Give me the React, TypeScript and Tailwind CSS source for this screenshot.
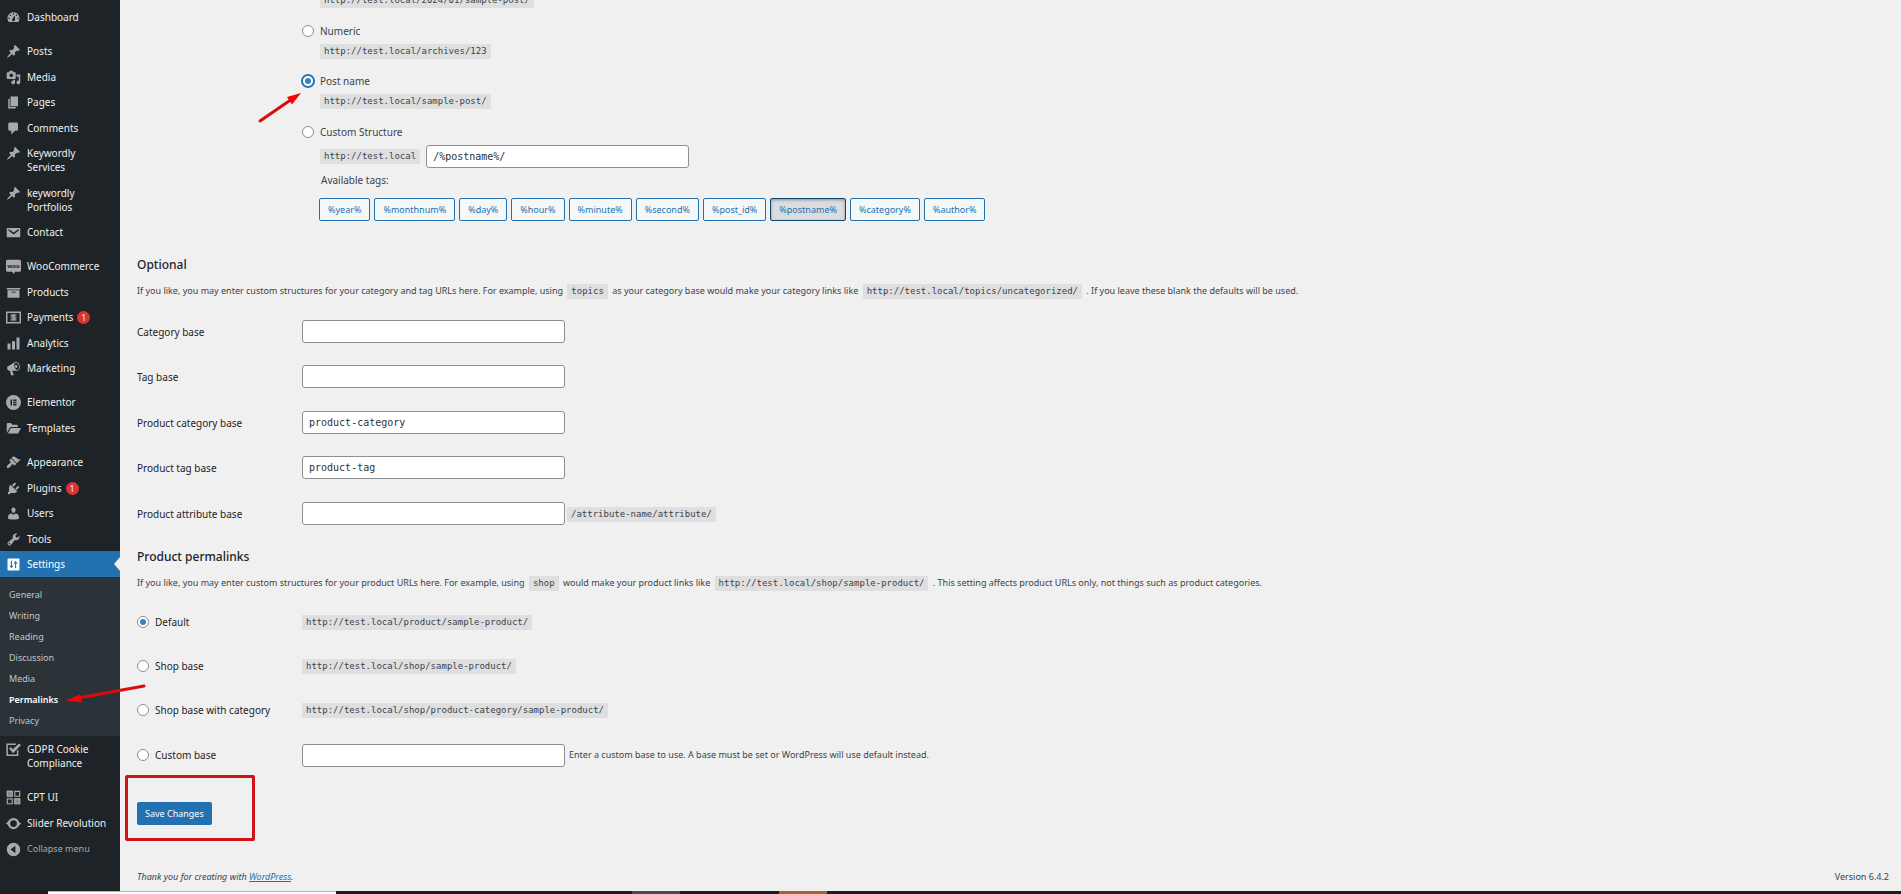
import React from 'react';

interface MenuItem {
    label: string;
    icon: React.ReactNode;
    badge?: number;
    active?: boolean;
}

const glyph = (d: string) => <path d={d} fillRule="evenodd" />;

const icons = {
    dashboard: glyph('M3.76 16h12.48c1.1-1.37 1.76-3.11 1.76-5 0-4.42-3.58-8-8-8s-8 3.58-8 8c0 1.89.66 3.63 1.76 5zM10 4c.55 0 1 .45 1 1s-.45 1-1 1-1-.45-1-1 .45-1 1-1zM6 6c.55 0 1 .45 1 1s-.45 1-1 1-1-.45-1-1 .45-1 1-1zm8 0c.55 0 1 .45 1 1s-.45 1-1 1-1-.45-1-1 .45-1 1-1zm-5.37 5.55L12 7v6c0 1.1-.9 2-2 2s-2-.9-2-2c0-.57.24-1.08.63-1.45zM4 10c.55 0 1 .45 1 1s-.45 1-1 1-1-.45-1-1 .45-1 1-1zm12 0c.55 0 1 .45 1 1s-.45 1-1 1-1-.45-1-1 .45-1 1-1z'),
    pin: glyph('M10.44 3.02l1.82-1.82 6.36 6.35-1.83 1.82c-1.05-.68-2.48-.57-3.41.36l-.75.75c-.92.93-1.04 2.35-.35 3.41l-1.83 1.82-2.41-2.41-2.8 2.79c-.42.42-3.38 2.71-3.8 2.29s1.86-3.39 2.28-3.81l2.79-2.79L4.1 9.36l1.83-1.82c1.05.69 2.48.57 3.4-.36l.75-.75c.93-.92 1.05-2.35.36-3.41z'),
    media: glyph('M13 11V4c0-.55-.45-1-1-1h-1.67L9 1H5L3.67 3H2c-.55 0-1 .45-1 1v7c0 .55.45 1 1 1h10c.55 0 1-.45 1-1zM7 4.5c1.38 0 2.5 1.12 2.5 2.5S8.38 9.5 7 9.5 4.5 8.38 4.5 7 5.62 4.5 7 4.5zM14 6h5v10.5c0 1.38-1.12 2.5-2.5 2.5S14 17.88 14 16.5s1.12-2.5 2.5-2.5c.17 0 .34.02.5.05V9h-3V6zm-4 8.05V13h2v3.5c0 1.38-1.12 2.5-2.5 2.5S7 17.88 7 16.5 8.12 14 9.5 14c.17 0 .34.02.5.05z'),
    page: glyph('M6 15V2h10v13H6zm-1 1h8v2H3V5h2v11z'),
    comment: glyph('M5 2h9c1.1 0 2 .9 2 2v7c0 1.1-.9 2-2 2h-2l-5 5v-5H5c-1.1 0-2-.9-2-2V4c0-1.1.9-2 2-2z'),
    email: glyph('M2 4h16.5c.3 0 .5.2.5.5v11.3c0 .3-.2.5-.5.5h-17c-.3 0-.5-.2-.5-.5V4.5c0-.3.3-.5.6-.5zm8.2 8.6l6.9-5.4c.3-.3.3-.7.1-1-.3-.4-.8-.4-1.1-.2l-5.9 4-5.9-4c-.3-.2-.8-.2-1.1.2-.2.3-.2.7.1 1z'),
    woo: (
        <>
            <path d="M2 1h16a2 2 0 0 1 2 2v12a2 2 0 0 1-2 2h-6l-1.5 3L8 17H2a2 2 0 0 1-2-2V3a2 2 0 0 1 2-2z" />
            <text x="10" y="12" textAnchor="middle" fontSize="8" fontWeight="700" fill="#1d2327" fontFamily="Noto Sans, sans-serif">woo</text>
        </>
    ),
    archive: glyph('M19 4v2H1V4h18zM2 7h16v10H2V7zm11 3V9H7v1h6z'),
    payments: (
        <>
            <path d="M0 2h20v16H0zM2 4v12h16V4z" fillRule="evenodd" />
            <path d="M6 5h8v10H6z" opacity=".5" />
            <text x="10" y="14" textAnchor="middle" fontSize="11" fontWeight="700" fontFamily="Noto Sans, sans-serif">$</text>
        </>
    ),
    chart: glyph('M18 18V2h-4v16h4zm-6 0V7H8v11h4zm-6 0v-8H2v8h4z'),
    megaphone: glyph('M18.15 5.94c.46 1.62.38 3.22-.02 4.48-.42 1.28-1.26 2.18-2.3 2.48-.16.06-.26.06-.4.06-.06.02-.12.02-.18.02-.06.02-.14.02-.22.02h-6.8l2.22 5.5c.02.14-.06.26-.14.34-.08.1-.24.16-.34.16H6.95c-.1 0-.26-.06-.34-.16-.08-.08-.16-.2-.14-.34l-1-5.5H4.25l-.02-.02c-.5.06-1.08-.18-1.54-.62s-.88-1.08-1.06-1.88c-.24-.8-.2-1.56-.02-2.2.18-.62.58-1.08 1.06-1.3l.02-.02 9-5.4c.1-.06.18-.1.24-.16.06-.04.14-.08.24-.12.16-.08.28-.12.5-.18 1.04-.3 2.24.1 3.22.98s1.84 2.24 2.26 3.86zm-2.58 5.98h-.02c.4-.1.74-.34 1.04-.7.58-.7.86-1.76.86-3.04 0-.64-.1-1.3-.28-1.98-.34-1.36-1.02-2.5-1.78-3.24s-1.68-1.1-2.46-.88c-.82.22-1.4.96-1.7 2-.32 1.04-.28 2.36.06 3.72.38 1.36 1 2.5 1.8 3.24.78.74 1.62 1.1 2.48.88zm-2.54-7.08c.22-.04.42-.02.62.04.38.16.76.48 1.02 1s.42 1.2.42 1.78c0 .3-.04.56-.12.8-.18.48-.44.84-.86.94-.34.1-.8-.06-1.14-.4s-.64-.86-.78-1.5c-.18-.62-.12-1.24.02-1.72s.48-.84.82-.94z'),
    elementor: (
        <>
            <circle cx="10" cy="10" r="10" />
            <path d="M6 6h2v8H6zM9.5 6H14v2H9.5zM9.5 9H14v2H9.5zM9.5 12H14v2H9.5z" fill="#1d2327" />
        </>
    ),
    folder: glyph('M1 16V4c0-.8.5-1.3 1.3-1.3h4.2L8.5 5h6c.8 0 1.3.5 1.3 1.2V8H6.5c-.7 0-1.2.3-1.5.9zm1.5.8L6 10c.2-.5.6-.8 1.2-.8H20l-3.5 6.9c-.3.5-.7.7-1.2.7z'),
    appearance: glyph('M14.48 11.06L7.41 3.99l1.5-1.5c.5-.56 2.3-.47 3.51.32 1.21.8 1.43 1.28 2.91 2.1 1.18.64 2.45 1.26 4.45.85zm-.71.71L6.7 4.7 4.93 6.47c-.39.39-.39 1.02 0 1.41l1.06 1.06c.39.39.39 1.03 0 1.42-.6.6-1.43 1.11-2.21 1.69-.35.26-.7.53-1.01.84C1.43 14.23.4 16.08 1.4 17.07c.99 1 2.84-.03 4.18-1.36.31-.31.58-.66.85-1.02.57-.78 1.08-1.61 1.69-2.21.39-.39 1.02-.39 1.41 0l1.06 1.06c.39.39 1.02.39 1.41 0z'),
    plugin: glyph('M13.11 4.36L9.87 7.6 8 5.73l3.24-3.24c.35-.34 1.05-.2 1.56.32.52.51.66 1.21.31 1.55zm-8 1.77l.91-1.12 9.01 9.01-1.19.84c-.71.71-2.63 1.16-3.82 1.16H6.14L4.9 17.26c-.59.59-1.54.59-2.12 0-.59-.58-.59-1.53 0-2.12l1.24-1.24v-3.88c0-1.13.4-3.19 1.09-3.89zm7.26 3.97l3.24-3.24c.34-.35 1.04-.21 1.55.31.52.51.66 1.21.31 1.55l-3.24 3.25z'),
    user: glyph('M10 9.25c-2.27 0-2.73-3.44-2.73-3.44C7 4.02 7.82 2 9.97 2c2.16 0 2.98 2.02 2.71 3.81 0 0-.41 3.44-2.68 3.44zm0 2.57L12.72 10c2.39 0 4.52 2.33 4.52 4.53v2.49s-3.65 1.13-7.24 1.13c-3.65 0-7.24-1.13-7.24-1.13v-2.49c0-2.25 1.94-4.48 4.47-4.48z'),
    wrench: glyph('M16.68 9.77c-1.34 1.34-3.3 1.67-4.95.99l-5.41 6.52c-.99.99-2.59.99-3.58 0s-.99-2.59 0-3.57l6.52-5.42c-.68-1.65-.35-3.61.99-4.95 1.28-1.28 3.12-1.62 4.72-1.06l-2.89 2.89 2.82 2.82 2.86-2.87c.53 1.58.18 3.39-1.08 4.65zM3.81 16.21c.4.39 1.04.39 1.43 0 .4-.4.4-1.04 0-1.43-.39-.4-1.03-.4-1.43 0-.39.39-.39 1.03 0 1.43z'),
    settings: glyph('M18 17V3c0-.55-.45-1-1-1H3c-.55 0-1 .45-1 1v14c0 .55.45 1 1 1h14c.55 0 1-.45 1-1zM6.5 5H8v6.5h2L7.25 15 4.5 11.5h2zM12 15V8.5h-2L12.75 5l2.75 3.5h-2V15z'),
    gdpr: (
        <>
            <path d="M15.5 11v6.5h-14V3H13" fill="none" stroke="currentColor" strokeWidth="2" />
            <path d="M4 8.5l2.5-2L9 9.5 17.5 2 20 4 9.5 15z" />
        </>
    ),
    cpt: (
        <>
            <path d="M1 1h8v8H1zM11 11h8v8h-8z" opacity=".75" />
            <path d="M11.75 1.75h6.5v6.5h-6.5zM1.75 11.75h6.5v6.5h-6.5zM1.75 1.75h6.5v6.5h-6.5zM11.75 11.75h6.5v6.5h-6.5z" fill="none" stroke="currentColor" strokeWidth="1.5" />
        </>
    ),
    slider: (
        <>
            <circle cx="10" cy="10" r="6" fill="none" stroke="currentColor" strokeWidth="3" />
            <path d="M0 10l4-4v7zM20 10l-4 4V7z" />
        </>
    ),
    collapse: glyph('M10 1a9 9 0 1 0 0 18 9 9 0 0 0 0-18zM12.5 5v10L6 10z'),
};

const menuGroups: MenuItem[][] = [
    [{ label: 'Dashboard', icon: icons.dashboard }],
    [
        { label: 'Posts', icon: icons.pin },
        { label: 'Media', icon: icons.media },
        { label: 'Pages', icon: icons.page },
        { label: 'Comments', icon: icons.comment },
        { label: 'Keywordly Services', icon: icons.pin },
        { label: 'keywordly Portfolios', icon: icons.pin },
        { label: 'Contact', icon: icons.email },
    ],
    [
        { label: 'WooCommerce', icon: icons.woo },
        { label: 'Products', icon: icons.archive },
        { label: 'Payments', icon: icons.payments, badge: 1 },
        { label: 'Analytics', icon: icons.chart },
        { label: 'Marketing', icon: icons.megaphone },
    ],
    [
        { label: 'Elementor', icon: icons.elementor },
        { label: 'Templates', icon: icons.folder },
    ],
    [
        { label: 'Appearance', icon: icons.appearance },
        { label: 'Plugins', icon: icons.plugin, badge: 1 },
        { label: 'Users', icon: icons.user },
        { label: 'Tools', icon: icons.wrench },
        { label: 'Settings', icon: icons.settings, active: true },
    ],
];

const lowerGroups: MenuItem[][] = [
    [{ label: 'GDPR Cookie Compliance', icon: icons.gdpr }],
    [
        { label: 'CPT UI', icon: icons.cpt },
        { label: 'Slider Revolution', icon: icons.slider },
    ],
];

const settingsPages = ['General', 'Writing', 'Reading', 'Discussion', 'Media', 'Permalinks', 'Privacy'];

const tags = ['year', 'monthnum', 'day', 'hour', 'minute', 'second', 'post_id', 'postname', 'category', 'author'];

const baseFields = [
    { id: 'category-base', label: 'Category base', value: '' },
    { id: 'tag-base', label: 'Tag base', value: '' },
    { id: 'product-category-base', label: 'Product category base', value: 'product-category' },
    { id: 'product-tag-base', label: 'Product tag base', value: 'product-tag' },
    { id: 'product-attribute-base', label: 'Product attribute base', value: '', suffix: '/attribute-name/attribute/' },
];

const productOptions = [
    { id: 'default', label: 'Default', url: 'http://test.local/product/sample-product/' },
    { id: 'shop', label: 'Shop base', url: 'http://test.local/shop/sample-product/' },
    { id: 'shop-category', label: 'Shop base with category', url: 'http://test.local/shop/product-category/sample-product/' },
];

const MenuIcon = ({ children }: { children: React.ReactNode }) => (
    <svg viewBox="0 0 20 20" className="size-[15px] shrink-0 overflow-visible" fill="currentColor" aria-hidden="true">
        {children}
    </svg>
);

const MenuGroup = ({ items }: { items: MenuItem[] }) => (
    <ul>
        {items.map(item => (
            <li key={item.label} className="group">
                <a
                    href="#"
                    className={
                        item.active
                            ? 'relative flex gap-1.5 bg-[#2271b1] py-1.5 pl-1.5 text-white'
                            : 'flex gap-1.5 py-1.5 pl-1.5 text-[#f0f0f1] group-even:pb-[5px]'
                    }
                >
                    <span className={item.active ? 'h-3.5 text-white' : 'h-3.5 text-[#a7aaad]'}>
                        <MenuIcon>{item.icon}</MenuIcon>
                    </span>
                    <span className={item.label.includes('eywordly') || item.label.startsWith('GDPR') ? 'w-16' : 'whitespace-nowrap'}>
                        {item.label}
                    </span>
                    {item.badge && (
                        <span className="-mr-1 -ml-0.5 flex size-[13px] items-center justify-center self-end rounded-full bg-[#d63638] text-[8px] text-white">
                            {item.badge}
                        </span>
                    )}
                    {item.active && (
                        <span className="absolute top-1.5 right-0 border-y-[7px] border-r-[6px] border-y-transparent border-r-[#f0f0f1]" />
                    )}
                </a>
            </li>
        ))}
    </ul>
);

const Code = ({ children }: { children: React.ReactNode }) => (
    <code className="inline-block bg-[#dfdfe0] px-1 font-['Consolas','DejaVu_Sans_Mono',monospace] text-[9px] leading-[15px] text-[#3c434a]">
        {children}
    </code>
);

const Radio = (props: React.InputHTMLAttributes<HTMLInputElement> & { highlighted?: boolean }) => {
    const { highlighted, ...rest } = props;
    return (
        <input
            type="radio"
            className={
                highlighted
                    ? 'flex size-3 shrink-0 appearance-none items-center justify-center rounded-full border border-[#2271b1] bg-white ring-1 ring-[#2271b1] checked:before:size-1.5 checked:before:rounded-full checked:before:bg-[#3582c4]'
                    : 'flex size-3 shrink-0 appearance-none items-center justify-center rounded-full border border-[#8c8f94] bg-white checked:before:size-1.5 checked:before:rounded-full checked:before:bg-[#3582c4]'
            }
            {...rest}
        />
    );
};

const TextInput = (props: React.InputHTMLAttributes<HTMLInputElement>) => (
    <input
        type="text"
        className="h-[23px] w-[263px] rounded-[3px] border border-[#8c8f94] bg-white px-1.5 font-['Consolas','DejaVu_Sans_Mono',monospace] text-[10px] text-[#2c3338]"
        {...props}
    />
);

export default function App() {
    return (
        <div className="relative flex min-h-screen flex-col overflow-hidden bg-[#f0f0f1] font-['Segoe_UI','Noto_Sans',sans-serif] text-[10px] leading-[14px] text-[#3c434a]">
            <div className="flex flex-1">
                <nav className="flex w-[120px] shrink-0 flex-col bg-[#1d2327] pt-1" aria-label="Main menu">
                    <div className="flex flex-col gap-2">
                        {menuGroups.slice(0, 4).map(group => (
                            <MenuGroup key={group[0].label} items={group} />
                        ))}
                    </div>
                    <div className="mt-[9px]">
                        <MenuGroup items={menuGroups[4]} />
                    </div>
                    <ul className="bg-[#2c3338] pt-[7px] pb-[5px]">
                        {settingsPages.map(page => (
                            <li key={page}>
                                <a
                                    href="#"
                                    className={
                                        page === 'Permalinks'
                                            ? 'block pl-[9px] text-[9px] leading-[21px] font-semibold text-white'
                                            : 'block pl-[9px] text-[9px] leading-[21px] text-[#c3c4c7]'
                                    }
                                >
                                    {page}
                                </a>
                            </li>
                        ))}
                    </ul>
                    <div className="flex flex-col gap-2">
                        {lowerGroups.map(group => (
                            <MenuGroup key={group[0].label} items={group} />
                        ))}
                    </div>
                    <button type="button" className="flex gap-1.5 py-[7px] pl-1.5 text-[9px] text-[#a7aaad]">
                        <MenuIcon>{icons.collapse}</MenuIcon>
                        Collapse menu
                    </button>
                </nav>

                <main className="-mt-[7px] flex flex-1 flex-col pr-3 pl-[17px]">
                    <form>
                        <div className="flex flex-col pl-[165px]">
                            <div className="flex pl-[18px]"><Code>http://test.local/2024/01/sample-post/</Code></div>
                            <label className="mt-4 flex items-center gap-1.5">
                                <Radio name="structure" />
                                Numeric
                            </label>
                            <div className="mt-1.5 flex pl-[18px]"><Code>http://test.local/archives/123</Code></div>
                            <label className="mt-[15px] flex items-center gap-1.5">
                                <Radio name="structure" defaultChecked highlighted />
                                Post name
                            </label>
                            <div className="mt-1.5 flex pl-[18px]"><Code>http://test.local/sample-post/</Code></div>
                            <label className="mt-4 flex items-center gap-1.5">
                                <Radio name="structure" />
                                Custom Structure
                            </label>
                            <div className="mt-1.5 flex items-center gap-1.5 pl-[18px]">
                                <Code>http://test.local</Code>
                                <TextInput aria-label="Custom structure" defaultValue="/%postname%/" />
                            </div>
                            <p className="mt-[5px] pl-[19px]">Available tags:</p>
                            <div className="mt-[11px] flex gap-1 pl-[17px]">
                                {tags.map(tag => (
                                    <button
                                        key={tag}
                                        type="button"
                                        className={
                                            tag === 'postname'
                                                ? 'h-[23px] rounded-[2px] border border-[#0a4b78] bg-[#dcdcde] px-2 text-[9px] text-[#2271b1] shadow-[inset_0_1px_3px_#8c8f94]'
                                                : 'h-[23px] rounded-[2px] border border-[#2271b1] bg-[#f6f7f7] px-2 text-[9px] text-[#2271b1]'
                                        }
                                    >
                                        %{tag}%
                                    </button>
                                ))}
                            </div>
                        </div>

                        <h2 className="mt-9 text-xs leading-4 font-medium text-[#1d2327]">Optional</h2>
                        <p className="mt-2.5 text-[9px] leading-[15px] [&_code]:mx-0.5">
                            If you like, you may enter custom structures for your category and tag URLs here. For example, using{' '}
                            <Code>topics</Code> as your category base would make your category links like{' '}
                            <Code>http://test.local/topics/uncategorized/</Code> . If you leave these blank the defaults will be used.
                        </p>

                        <div className="mt-2.5">
                            {baseFields.map(field => (
                                <div key={field.id} className="flex items-center py-[11px] even:pb-3">
                                    <label htmlFor={field.id} className="w-[165px] text-[#1d2327]">{field.label}</label>
                                    <TextInput id={field.id} defaultValue={field.value} />
                                    {field.suffix && <span className="pl-0.5"><Code>{field.suffix}</Code></span>}
                                </div>
                            ))}
                        </div>

                        <h2 className="mt-[13px] text-xs leading-4 font-medium text-[#1d2327]">Product permalinks</h2>
                        <p className="mt-2.5 text-[9px] leading-[15px] [&_code]:mx-0.5">
                            If you like, you may enter custom structures for your product URLs here. For example, using{' '}
                            <Code>shop</Code> would make your product links like{' '}
                            <Code>http://test.local/shop/sample-product/</Code> . This setting affects product URLs only, not things such as
                            product categories.
                        </p>

                        <div className="mt-[9px]">
                            {productOptions.map(option => (
                                <div key={option.id} className="flex h-11 items-center">
                                    <label className="flex w-[165px] items-center gap-1.5 text-[#1d2327]">
                                        <Radio name="product-base" defaultChecked={option.id === 'default'} />
                                        {option.label}
                                    </label>
                                    <Code>{option.url}</Code>
                                </div>
                            ))}
                            <div className="flex h-[46px] items-center">
                                <label className="flex w-[165px] items-center gap-1.5 text-[#1d2327]">
                                    <Radio name="product-base" />
                                    Custom base
                                </label>
                                <TextInput aria-label="Custom product base" />
                                <span className="pl-1 text-[9px]">
                                    Enter a custom base to use. A base must be set or WordPress will use default instead.
                                </span>
                            </div>
                        </div>

                        <div className="relative mt-6 flex">
                            <button type="submit" className="h-[23px] rounded-[2px] bg-[#2271b1] px-2 text-[9px] text-white">
                                Save Changes
                            </button>
                            <span className="pointer-events-none absolute -top-[27px] -left-3 h-[66px] w-[130px] rounded-[2px] border-[3px] border-[#d01316]" />
                        </div>
                    </form>

                    <footer className="mt-auto flex justify-between pb-[7px] text-[9px]">
                        <p className="italic">
                            Thank you for creating with <a href="#" className="text-[#2271b1] underline">WordPress</a>.
                        </p>
                        <p>Version 6.4.2</p>
                    </footer>
                </main>
            </div>

            <div className="flex h-[3px] bg-[#1f1c1d]">
                <span className="ml-12 w-72 border-t border-[#b5b5b5] bg-white" />
                <span className="ml-[296px] w-12 bg-[#4a4a4a]" />
                <span className="ml-[99px] w-12 bg-[#a5622c]" />
            </div>

            <svg className="pointer-events-none absolute top-0 left-0" width="320" height="720" aria-hidden="true">
                <path d="M260 121L292 99" stroke="#d90c0c" strokeWidth="3" strokeLinecap="round" />
                <path d="M301 93L287 97L292 104.5z" fill="#f30505" />
                <path d="M144 686L78 698" stroke="#d90c0c" strokeWidth="3" strokeLinecap="round" />
                <path d="M66 700.5L80 694.5L82 702.5z" fill="#f30505" />
            </svg>
        </div>
    );
}
